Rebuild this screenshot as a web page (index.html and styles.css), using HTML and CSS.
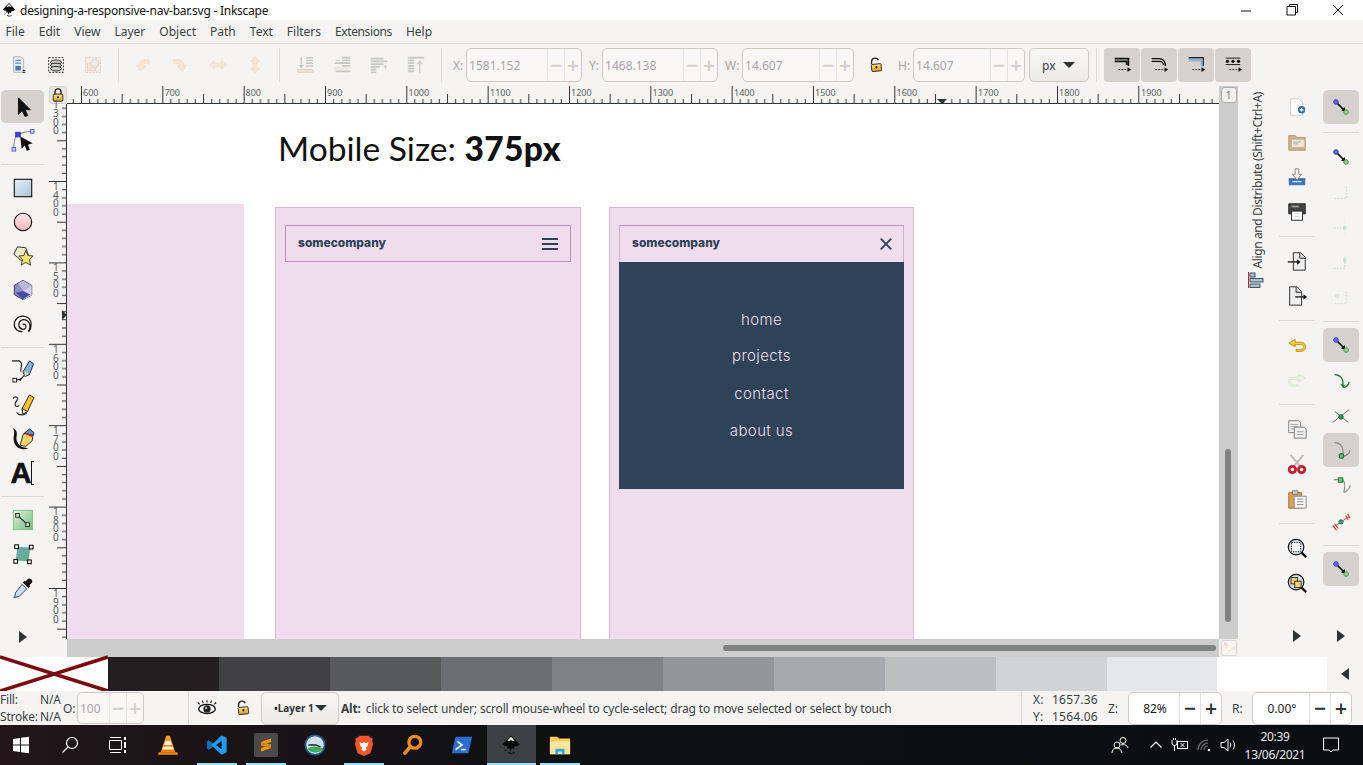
FILE: index.html
```html
<!DOCTYPE html>
<html lang="en">
<head>
<meta charset="utf-8">
<title>designing-a-responsive-nav-bar.svg - Inkscape</title>
<link rel="stylesheet" href="styles.css">
</head>
<body>
<svg class="defs" aria-hidden="true">
  <defs>
    <linearGradient id="gBlue" x1="0" y1="0" x2="1" y2="1"><stop offset="0" stop-color="#e8f0f6"/><stop offset="1" stop-color="#a9c3dc"/></linearGradient>
    <linearGradient id="gPink" x1="0" y1="0" x2="0" y2="1"><stop offset="0" stop-color="#ffe9ec"/><stop offset="1" stop-color="#fbb4bf"/></linearGradient>
    <linearGradient id="gGreen" x1="0" y1="0" x2="1" y2="1"><stop offset="0" stop-color="#e2f2e2"/><stop offset="1" stop-color="#6fbe7a"/></linearGradient>
    <linearGradient id="gTeal" x1="0" y1="0" x2="1" y2="1"><stop offset="0" stop-color="#6fa8b8"/><stop offset="1" stop-color="#62b083"/></linearGradient>
    <linearGradient id="gGold" x1="0" y1="0" x2="0" y2="1"><stop offset="0" stop-color="#fbe27a"/><stop offset="1" stop-color="#e2a11e"/></linearGradient>
    <linearGradient id="gCone" x1="0" y1="0" x2="0" y2="1"><stop offset="0" stop-color="#ffa428"/><stop offset="1" stop-color="#f07d00"/></linearGradient>
    <linearGradient id="gSwatch" x1="0" y1="0" x2="1" y2="1"><stop offset="0" stop-color="#f3b8d4"/><stop offset=".5" stop-color="#fdfbe8"/><stop offset="1" stop-color="#9be4b4"/></linearGradient>
    <symbol id="snap" viewBox="0 0 24 24"><path d="M7.500 7.500l7.500 7.500" stroke="#111" stroke-width="1.800"/><path d="M12 16l5 1-1-5z" fill="#111"/><circle cx="6.500" cy="6.500" r="2.500" fill="#6a6af0" stroke="#2d2dcf"/><circle cx="17.500" cy="17.500" r="2.500" fill="#9bd29b" stroke="#2f8f43"/></symbol>
    <symbol id="faint" viewBox="0 0 24 24"><path d="M5 19h13V6" fill="none" stroke="#d3dfd3" stroke-width="1.600" stroke-dasharray="2 1.400"/></symbol>
    <symbol id="tri-r" viewBox="0 0 12 14"><path d="M2 1l8 6-8 6z" fill="#2e3436"/></symbol>
    <symbol id="lockopen" viewBox="0 0 16 18"><path d="M3 8V5a4 4 0 0 1 7.600-1.500" fill="none" stroke="#222" stroke-width="1.500"/><rect x="3" y="8" width="11" height="8" rx="1" fill="url(#gGold)" stroke="#222" transform="rotate(-6 8 12)"/><circle cx="8.500" cy="11.500" r="1.300" fill="#222"/></symbol>
    <symbol id="ink" viewBox="0 0 24 24"><path d="M12 1.500l9.500 10-3.500 2.500-2-.8-1 3.500-2.200-1.500-1.300 4-1.500-4-2.200.8.300-3.300-2.600.3L2.500 11.500z" fill="#0a0a0a"/><path d="M12 3l4 4.300-2 .2-2-1-2 1-2-.2z" fill="#eee"/><path d="M9 20c2 1.500 5 1.500 7 0M7 17.500l-2 1" stroke="#111" stroke-width="1.300" fill="none"/></symbol>
  </defs>
</svg>

<div class="app">
  <header class="titlebar">
    <svg class="ic16 logo"><use href="#ink"/></svg>
    <span class="title">designing-a-responsive-nav-bar.svg - Inkscape</span>
    <div class="winctl">
      <span class="winbtn"><svg viewBox="0 0 12 12" class="ic12"><path d="M1 7h10" stroke="#111"/></svg></span>
      <span class="winbtn"><svg viewBox="0 0 12 12" class="ic12"><path d="M3.500 2.500V.5h8v8h-2M1 2.500h8.500V11H1z" fill="none" stroke="#111"/></svg></span>
      <span class="winbtn"><svg viewBox="0 0 12 12" class="ic12"><path d="M1 1l10 10M11 1L1 11" stroke="#111"/></svg></span>
    </div>
  </header>

  <nav class="menubar">
    <span>File</span><span>Edit</span><span>View</span><span>Layer</span><span>Object</span><span>Path</span><span>Text</span><span>Filters</span><span class="m-ext">Extensions</span><span>Help</span>
  </nav>

  <div class="toolbar">
    <span class="tslot"><svg class="ic24" viewBox="0 0 24 24"><path d="M6 3h8l3 3v14H6z" fill="#e6ebf1" stroke="#a7b4c2"/><path d="M8 7h6M8 10h6" stroke="#5f8fc0" stroke-width="1.500"/><rect x="8" y="13" width="6" height="5" fill="#4c7aa8"/><path d="M16 18h3M16 20h3" stroke="#111"/></svg></span>
    <span class="tslot"><svg class="ic24" viewBox="0 0 24 24"><rect x="4" y="4" width="16" height="16" fill="none" stroke="#111" stroke-dasharray="2 1.500"/><ellipse cx="12" cy="9" rx="6" ry="2.500" fill="#ccc" stroke="#222"/><ellipse cx="12" cy="12.500" rx="6" ry="2.500" fill="#ccc" stroke="#222"/><ellipse cx="12" cy="16" rx="6" ry="2.500" fill="#ccc" stroke="#222"/></svg></span>
    <span class="tslot"><svg class="ic24" viewBox="0 0 24 24"><rect x="4" y="4" width="16" height="16" fill="#f7eeea" stroke="#f0b9b9" stroke-dasharray="2 1.500"/><rect x="6" y="10" width="9" height="8" fill="#f0e4d6" stroke="#e4d3c0"/><circle cx="14" cy="10" r="4.500" fill="#ece9e4" stroke="#d6d0ca"/></svg></span>
    <span class="tsep"></span>
    <span class="tslot"><svg class="ic24" viewBox="0 0 24 24"><path d="M18 6c-7-1-10 2-10 7H5l5 6 5-6h-3c0-3 2-4 6-3z" transform="rotate(8 12 12)" fill="#f7e7d5" stroke="#efdcc7"/></svg></span>
    <span class="tslot"><svg class="ic24" viewBox="0 0 24 24"><path d="M6 6c7-1 10 2 10 7h3l-5 6-5-6h3c0-3-2-4-6-3z" transform="rotate(-8 12 12)" fill="#f7e7d5" stroke="#efdcc7"/></svg></span>
    <span class="tslot"><svg class="ic24" viewBox="0 0 24 24"><path d="M3 12l5-4.500V10h8V7.500l5 4.500-5 4.500V14H8v2.500z" fill="#f7e7d5" stroke="#efdcc7"/></svg></span>
    <span class="tslot"><svg class="ic24" viewBox="0 0 24 24"><path d="M12 3l4.500 5H14v8h2.500L12 21l-4.500-5H10V8H7.500z" fill="#f7e7d5" stroke="#efdcc7"/></svg></span>
    <span class="tsep"></span>
    <span class="tslot"><svg class="ic24" viewBox="0 0 24 24"><path d="M13 4h8M13 7h8M13 10h8M13 13h8" stroke="#c6c6c4" stroke-width="1.600"/><path d="M8 3v11" stroke="#c6c6c4" stroke-width="1.500"/><path d="M5 12l3 4 3-4z" fill="#c6c6c4"/><path d="M4 17h17v3H4z" fill="#f1e4d2" stroke="#ddd2c2"/></svg></span>
    <span class="tslot"><svg class="ic24" viewBox="0 0 24 24"><path d="M12 4h9M12 7h9M4 10h17M12 13h9M5 19h16" stroke="#c6c6c4" stroke-width="1.800"/><path d="M3 14h18v3H3z" fill="#eee5d8" opacity=".7"/><path d="M5 7h5" stroke="#c6c6c4"/></svg></span>
    <span class="tslot"><svg class="ic24" viewBox="0 0 24 24"><path d="M3 5h14M3 8h18M3 11h14M3 14h10M3 17h6M3 20h6" stroke="#c6c6c4" stroke-width="1.800"/><path d="M17 14h4M19 12v4" stroke="#c6c6c4"/></svg></span>
    <span class="tslot"><svg class="ic24" viewBox="0 0 24 24"><path d="M3 4h18M3 7h7M3 10h7M3 13h7M3 16h7M3 19h7" stroke="#c6c6c4" stroke-width="1.800"/><path d="M16 21V9M13.500 11l2.500-3 2.500 3" stroke="#c6c6c4" fill="none" stroke-width="1.300"/></svg></span>
    <span class="tsep"></span>
    <label class="lab lab-x">X:</label>
    <div class="spin spin-l"><span class="val">1581.152</span><span class="pm">−</span><span class="pm">+</span></div>
    <label class="lab lab-y">Y:</label>
    <div class="spin spin-l"><span class="val">1468.138</span><span class="pm">−</span><span class="pm">+</span></div>
    <label class="lab lab-w">W:</label>
    <div class="spin spin-m"><span class="val">14.607</span><span class="pm">−</span><span class="pm">+</span></div>
    <span class="lockslot"><svg class="ic16"><use href="#lockopen"/></svg></span>
    <label class="lab lab-h">H:</label>
    <div class="spin spin-m"><span class="val">14.607</span><span class="pm">−</span><span class="pm">+</span></div>
    <div class="unit"><span>px</span><i class="caret"></i></div>
    <span class="tsep tsep-u"></span>
    <span class="tbtn"><svg class="ic24" viewBox="0 0 24 24"><path d="M4 5h15v8M4 8h13v4" fill="none" stroke="#111" stroke-width="1.800"/><path d="M8 17h10" stroke="#111" stroke-dasharray="2 1.300"/><path d="M18 14.500l4 2.500-4 2.500z" fill="#111"/></svg></span>
    <span class="tbtn"><svg class="ic24" viewBox="0 0 24 24"><path d="M4 5h8c4 0 7 3 7 8M4 8h8c3 0 5 2 5 4" fill="none" stroke="#111" stroke-width="1.400"/><path d="M8 17h10" stroke="#111" stroke-dasharray="2 1.300"/><path d="M18 14.500l4 2.500-4 2.500z" fill="#111"/></svg></span>
    <span class="tbtn"><svg class="ic24" viewBox="0 0 24 24"><path d="M4 4h16v9h-3V8H4z" fill="#8fb0cf"/><path d="M4 4h16v9" fill="none" stroke="#222" stroke-width="1.200"/><path d="M8 17h10" stroke="#111" stroke-dasharray="2 1.300"/><path d="M18 14.500l4 2.500-4 2.500z" fill="#111"/></svg></span>
    <span class="tbtn"><svg class="ic24" viewBox="0 0 24 24"><path d="M4 4.500h16" stroke="#111"/><circle cx="6" cy="8" r="1.800" fill="#111"/><circle cx="12" cy="8" r="1.800" fill="#111"/><circle cx="18" cy="8" r="1.800" fill="#111"/><path d="M4 11.500h16" stroke="#111"/><path d="M8 17h10" stroke="#111" stroke-dasharray="2 1.300"/><path d="M18 14.500l4 2.500-4 2.500z" fill="#111"/></svg></span>
  </div>

  <main class="workspace">
    <aside class="col tools">
      <span class="slot on"><svg class="ic24" viewBox="0 0 24 24"><path d="M7 2v18l4.200-4 3 6.500 3-1.300-3-6.200H20z" fill="#111" stroke="#111" stroke-linejoin="round"/></svg></span>
      <span class="slot"><svg class="ic24" viewBox="0 0 24 24"><path d="M2 20C2 11 4 6 7 5c5-3 10-3.500 14-3.500" fill="none" stroke="#777"/><rect x="4" y="2.500" width="5" height="5" fill="#3c3cf0" stroke="#3030c0"/><rect x="20" y="-.5" width="4" height="4" fill="#ccf" stroke="#5555e0"/><rect x="0" y="19" width="4" height="4" fill="#ccf" stroke="#5555e0"/><path d="M9 7l13.500 7.500-5 1.500 2 5.500-3.500 1-2-5.500-3.500 3.500z" fill="#111"/></svg></span>
      <span class="sep"></span>
      <span class="slot"><svg class="ic24" viewBox="0 0 24 24"><rect x="2.500" y="2.500" width="19" height="19" fill="url(#gBlue)" stroke="#111" stroke-width="1.200"/></svg></span>
      <span class="slot"><svg class="ic24" viewBox="0 0 24 24"><circle cx="12" cy="12" r="9.500" fill="url(#gPink)" stroke="#111" stroke-width="1.200"/></svg></span>
      <span class="slot"><svg class="ic24" viewBox="0 0 24 24"><path d="M6 2l9 1 3 8-8 6-8-7z" fill="#efe9cc" stroke="#222"/><path d="M15 6l2.500 5.500 5.500.5-4 4 1.500 6-5.500-3-5 3 1.500-6-4-4 5.500-.5z" fill="#f6e46a" stroke="#333"/></svg></span>
      <span class="slot"><svg class="ic24" viewBox="0 0 24 24"><path d="M12 1.500l9.500 5.500v10.500L12 22.500 2.500 17V7z" fill="#8f8fc8" stroke="#333"/><path d="M12 1.500l9.500 5.500L12 13 6.500 5z" fill="#b7b7dd"/><path d="M12 13l9.500-6v10.500L12 22.500z" fill="#d0d0ee"/><path d="M4 15l8-2 8 4-8 5z" fill="#4a4aa8"/></svg></span>
      <span class="slot"><svg class="ic24" viewBox="0 0 24 24"><path d="M12 13c1-2 4 0 3 3-1.500 3-7 2-7.500-2.500C7 8 12 6 16 8c4 2.500 5 8 2 12M18 21C22 16 22 8 17 5 11 1 3 5 2.500 12c-.3 6 5 9 9 8" fill="none" stroke="#111" stroke-width="1.300"/></svg></span>
      <span class="sep"></span>
      <span class="slot"><svg class="ic24" viewBox="0 0 24 24"><path d="M0 1h8l2 2c2 3-2 7 0 10" fill="none" stroke="#222" stroke-width="1.200"/><path d="M12 13l7-12 4.500 3-4.500 12-5 2z" fill="#7fb2dc" stroke="#224"/><path d="M14 12l4 3-4 3z" fill="#f0d480"/><path d="M13 17c-2 4-5 5-9 5" fill="none" stroke="#222" stroke-width="1.200"/><rect x="1" y="20" width="4" height="4" fill="#fff" stroke="#111"/><rect x="8" y="20.500" width="2" height="2" fill="#111"/></svg></span>
      <span class="slot"><svg class="ic24" viewBox="0 0 24 24"><path d="M1 5c2-3 6-2 5 1-1 2-4 4-2 7 2 2 3-1 4 0" fill="none" stroke="#222" stroke-width="1.200"/><path d="M11 16l8-15 5 3-7 15-5 3z" fill="#f9c02e" stroke="#222"/><path d="M11 16l6 3-5 3z" fill="#fff" stroke="#222"/><path d="M5 20c3 4 8 3 11 1" fill="none" stroke="#222" stroke-width="1.200"/></svg></span>
      <span class="slot"><svg class="ic24" viewBox="0 0 24 24"><path d="M1 0c4 2 5 5 4 9-1 5 2 10 7 12l6 1c-7 3-15 0-16-8C1 9 4 5 1 0z" fill="#111"/><path d="M9 19l3-12 6-3 5 3-1 7-7 6z" fill="#f9d26a" stroke="#222"/><path d="M13 6l6-5 5 4-1 3z" fill="#5a92c8" stroke="#222"/><path d="M16 6l6 3" stroke="#d11" stroke-width="2"/></svg></span>
      <span class="slot"><span class="texticon">A</span><i class="ibeam"></i></span>
      <span class="sep"></span>
      <span class="slot"><svg class="ic24" viewBox="0 0 24 24"><rect x="1.500" y="1.500" width="21" height="21" fill="url(#gGreen)" stroke="#7bc089"/><path d="M5.500 6.500l12 11" stroke="#333" stroke-width="1.300"/><rect x="4" y="5" width="4" height="4" fill="#ddd" stroke="#222"/><rect x="15" y="15" width="4" height="4" fill="#ddd" stroke="#222"/></svg></span>
      <span class="slot"><svg class="ic24" viewBox="0 0 24 24"><path d="M6 4l14 1-2 15-14-1z" fill="url(#gTeal)"/><g fill="#fff" stroke="#111" stroke-width="1.200"><rect x="3" y="2" width="4" height="4"/><rect x="19" y="2.500" width="4" height="4"/><rect x="2" y="18" width="4" height="4"/><rect x="17" y="18.500" width="4" height="4"/></g></svg></span>
      <span class="slot"><svg class="ic24" viewBox="0 0 24 24"><path d="M21 2.500c2 2 1 3.500 0 4.500l-2 2 .8 1-2 2-6-6 2-2 1 .8 2-2c1-1 2.500-2 4.200-.3z" fill="#111"/><path d="M11 8l5 5-8 8-4 1-1-1 1-4z" fill="#cfe0ee" stroke="#334"/><circle cx="3" cy="22" r="1.300" fill="#4a7fb0"/></svg></span>
      <span class="slot tri"><svg class="ic14" viewBox="0 0 12 14"><use href="#tri-r"/></svg></span>
    </aside>

    <section class="center">
      <span class="lockbtn"><svg class="ic14" viewBox="0 0 14 16"><rect x="1.500" y="7" width="11" height="8" rx="1" fill="url(#gGold)" stroke="#222"/><path d="M3.500 7V4.500a3.500 3.500 0 0 1 7 0V7" fill="none" stroke="#222" stroke-width="1.500"/><circle cx="7" cy="10.500" r="1.200" fill="#222"/></svg></span>
      <svg class="hruler" width="1152" height="18">
        <defs>
          <pattern id="ph" patternUnits="userSpaceOnUse" x="14" y="0" width="81.330" height="18">
            <path d="M.5 0v17M8.600 13v4M16.800 13v4M24.900 13v4M33 13v4M41.200 8v9M49.300 13v4M57.400 13v4M65.600 13v4M73.700 13v4" stroke="#2e3436" fill="none"/>
          </pattern>
        </defs>
        <rect width="1152" height="17" fill="url(#ph)"/>
        <path d="M0 17.500h1152" stroke="#2e3436"/>
        <path d="M870 13h10l-5 5z" fill="#2e3436"/>
        <g class="rtext">
          <text x="16" y="10">600</text><text x="97.500" y="10">700</text><text x="178.500" y="10">800</text><text x="260" y="10">900</text><text x="341.500" y="10">1000</text><text x="423" y="10">1100</text><text x="504" y="10">1200</text><text x="585.500" y="10">1300</text><text x="667" y="10">1400</text><text x="748" y="10">1500</text><text x="829.500" y="10">1600</text><text x="911" y="10">1700</text><text x="992" y="10">1800</text><text x="1074" y="10">1900</text>
        </g>
      </svg>
      <span class="badgecell"><span class="badge">1</span></span>

      <svg class="vruler" width="18" height="535">
        <defs>
          <pattern id="pv" patternUnits="userSpaceOnUse" x="0" y="-4.400" width="18" height="81.400">
            <path d="M0 .5h17M13 8.600h4M13 16.800h4M13 24.900h4M13 33h4M8 41.200h9M13 49.300h4M13 57.400h4M13 65.600h4M13 73.700h4" stroke="#2e3436" fill="none"/>
          </pattern>
        </defs>
        <rect width="17" height="535" fill="url(#pv)"/>
        <path d="M17.500 0v535" stroke="#2e3436"/>
        <path d="M13 206l5 5-5 5z" fill="#2e3436"/>
        <g class="rtext vt">
          <text x="4 4 4 4" y="4 13 21.500 30">1300</text>
          <text x="4 4 4 4" y="86 94.500 103 111.500">1400</text>
          <text x="4 4 4 4" y="167 175.500 184 192.500">1500</text>
          <text x="4 4 4 4" y="249 257.500 266 274.500">1600</text>
          <text x="4 4 4 4" y="330 338.500 347 355.500">1700</text>
          <text x="4 4 4 4" y="411 419.500 428 436.500">1800</text>
          <text x="4 4 4 4" y="493 501.500 510 518.500">1900</text>
        </g>
      </svg>

      <div class="canvas">
        <h1 class="mobile">Mobile Size: <b>375px</b></h1>
        <div class="offpage"></div>
        <div class="board board-a">
          <div class="nav">
            <span class="brand">somecompany</span>
            <svg class="burger" viewBox="0 0 16 12"><path d="M0 1h16M0 6h16M0 11h16" stroke="#2e4358" stroke-width="1.900"/></svg>
          </div>
        </div>
        <div class="board board-b">
          <div class="nav nav-open">
            <span class="brand">somecompany</span>
            <svg class="closex" viewBox="0 0 12 12"><path d="M.7.7l10.600 10.600M11.300.7L.7 11.300" stroke="#2e4358" stroke-width="1.800"/></svg>
          </div>
          <ul class="drop">
            <li>home</li><li>projects</li><li>contact</li><li>about us</li>
          </ul>
        </div>
      </div>

      <div class="vscroll"><i class="vthumb"></i></div>
      <span class="blank"></span>
      <div class="hscroll"><i class="hthumb"></i></div>
      <span class="wheel"><svg class="ic16" viewBox="0 0 16 16"><rect x=".5" y=".5" width="15" height="15" rx="2" fill="#f7f6f4" stroke="#d8d4d0"/><path d="M3 2l11 6-9 6z" fill="url(#gSwatch)"/></svg></span>
    </section>

    <aside class="docktab">
      <span class="docklabel">Align and Distribute (Shift+Ctrl+A)</span>
      <svg class="alignic" viewBox="0 0 16 18"><path d="M.5 1v16" stroke="#c22"/><rect x="2" y="2" width="5" height="4" fill="#a8c0d8" stroke="#456"/><rect x="2" y="7.500" width="13" height="3.500" fill="#a8c0d8" stroke="#456"/><rect x="2" y="13" width="10" height="3.500" fill="#a8c0d8" stroke="#456"/></svg>
    </aside>

    <aside class="col commands">
      <span class="slot"><svg class="ic24" viewBox="0 0 24 24"><path d="M5 3h9l4 4v14H5z" fill="#fff" stroke="#ccc"/><circle cx="17" cy="15" r="4" fill="#2f6fb5"/><path d="M15 15h4M17 13v4" stroke="#fff" stroke-width="1.400"/></svg></span>
      <span class="slot"><svg class="ic24" viewBox="0 0 24 24"><path d="M3 5h7l2 2h9v14H3z" fill="#c9ae8a" stroke="#b39b78"/><path d="M6 9h14v9H6z" fill="#efe6d6" stroke="#c9b69a"/><path d="M8 12h8M8 14h5" stroke="#aaa"/></svg></span>
      <span class="slot"><svg class="ic24" viewBox="0 0 24 24"><path d="M3 14h18v7H3z" fill="#3c78bb"/><path d="M3 14h18" stroke="#204e85"/><path d="M10 3h4v6h3l-5 6-5-6h3z" fill="#eee" stroke="#888"/><path d="M7 17h10" stroke="#cde" stroke-width="1.500"/></svg></span>
      <span class="slot"><svg class="ic24" viewBox="0 0 24 24"><path d="M3 3h18v11H3z" fill="#444" stroke="#222"/><path d="M6 5h8v2H6z" fill="#999"/><path d="M6 11h12v10H6z" fill="#fff" stroke="#222"/><path d="M9 14h6M9 17h6" stroke="#bcd"/></svg></span>
      <span class="sep"></span>
      <span class="slot"><svg class="ic24" viewBox="0 0 24 24"><path d="M8 3h8l5 5v14H8z" fill="#eee" stroke="#222"/><path d="M15 3v6h6" fill="#ddd" stroke="#222"/><path d="M2 13h11" stroke="#111" stroke-width="1.400"/><path d="M12 10l4 3-4 3z" fill="#111"/></svg></span>
      <span class="slot"><svg class="ic24" viewBox="0 0 24 24"><path d="M4 2h8l5 5v15H4z" fill="#eee" stroke="#222"/><path d="M11 2v6h6" fill="#ddd" stroke="#222"/><path d="M10 13h11" stroke="#111" stroke-width="1.400"/><path d="M19 10l4 3-4 3z" fill="#111"/></svg></span>
      <span class="sep"></span>
      <span class="slot"><svg class="ic24" viewBox="0 0 24 24"><path d="M10 6L3 10l7 4v-2.500h6c3 0 4 1.500 3 3.500-1 2-3 2-8 2v2c6 0 9 0 10-3 1-4-1-7-5-7h-6z" fill="#f2cf3b" stroke="#b79412"/></svg></span>
      <span class="slot"><svg class="ic24" viewBox="0 0 24 24"><path d="M14 6l7 4-7 4v-2.500H8c-3 0-4 1.500-3 3.500 1 2 3 2 8 2v2c-6 0-9 0-10-3-1-4 1-7 5-7h6z" fill="#eaf3e6" stroke="#d4e6cd"/></svg></span>
      <span class="sep"></span>
      <span class="slot"><svg class="ic24" viewBox="0 0 24 24"><path d="M3 3h11l2 2v11H3z" fill="#f5f5f5" stroke="#777"/><path d="M5 7h8M5 9.500h8M5 12h6" stroke="#999"/><path d="M9 10h11l2 2v10H9z" fill="#eee" stroke="#777"/><path d="M12 15h7M12 18h7" stroke="#999"/></svg></span>
      <span class="slot"><svg class="ic24" viewBox="0 0 24 24"><path d="M5 2l10 12M19 2L9 14" stroke="#bbb" stroke-width="2"/><circle cx="7" cy="18" r="3.500" fill="#fff" stroke="#c71d2d" stroke-width="3"/><circle cx="17" cy="18" r="3.500" fill="#fff" stroke="#c71d2d" stroke-width="3"/></svg></span>
      <span class="slot"><svg class="ic24" viewBox="0 0 24 24"><path d="M3 5h14v17H3z" fill="#d7a258" stroke="#9c6d2e"/><path d="M7 3h6v4H7z" fill="#ccc" stroke="#777"/><path d="M9 9h13v13H9z" fill="#f7f7f7" stroke="#888"/><path d="M12 12h7M12 15h7M12 18h7" stroke="#888"/></svg></span>
      <span class="sep"></span>
      <span class="slot"><svg class="ic24" viewBox="0 0 24 24"><circle cx="11" cy="11" r="8.500" fill="#d5e2ee" stroke="#111" stroke-width="1.300"/><rect x="6" y="6" width="10" height="10" fill="#fff" stroke="#111" stroke-dasharray="1.500 1.200"/><path d="M17 17l5 5" stroke="#111" stroke-width="2.500"/></svg></span>
      <span class="slot"><svg class="ic24" viewBox="0 0 24 24"><circle cx="11" cy="11" r="8.500" fill="#d5e2ee" stroke="#111" stroke-width="1.300"/><rect x="5.500" y="6" width="7" height="7" fill="#f5d36b" stroke="#222"/><rect x="9.500" y="10" width="7" height="7" fill="#f5d36b" stroke="#222"/><path d="M17 17l5 5" stroke="#111" stroke-width="2.500"/></svg></span>
      <span class="slot tri"><svg class="ic14" viewBox="0 0 12 14"><use href="#tri-r"/></svg></span>
    </aside>

    <aside class="col snapbar">
      <span class="slot on"><svg class="ic24"><use href="#snap"/></svg></span>
      <span class="sep"></span>
      <span class="slot"><svg class="ic24"><use href="#snap"/></svg></span>
      <span class="slot"><svg class="ic24"><use href="#faint"/></svg></span>
      <span class="slot"><svg class="ic24" viewBox="0 0 24 24"><path d="M4 13h12" fill="none" stroke="#d3dfd3" stroke-width="1.600" stroke-dasharray="2 1.400"/><path d="M16 3v20" stroke="#e4ece4" stroke-dasharray="2 1.400"/><circle cx="16" cy="13" r="2.300" fill="#cfe0cf"/></svg></span>
      <span class="slot"><svg class="ic24" viewBox="0 0 24 24"><path d="M4 19h12V6" fill="none" stroke="#d3dfd3" stroke-width="1.600" stroke-dasharray="2 1.400"/><ellipse cx="16" cy="10" rx="1.800" ry="2.800" fill="#cfe0cf"/></svg></span>
      <span class="slot"><svg class="ic24" viewBox="0 0 24 24"><path d="M5 19h13V5" fill="none" stroke="#d9e4d9" stroke-width="1.600" stroke-dasharray="2 1.400"/><circle cx="8" cy="11" r="2" fill="#e2ede2" stroke="#cfe0cf"/></svg></span>
      <span class="sep"></span>
      <span class="slot on"><svg class="ic24"><use href="#snap"/></svg></span>
      <span class="slot"><svg class="ic24" viewBox="0 0 24 24"><path d="M5 5c6 0 10 4 9 13" fill="none" stroke="#1d7a34" stroke-width="1.500"/><path d="M21 13c-1 4-4 6-7 6" fill="none" stroke="#1d7a34" stroke-width="1.500"/><path d="M11 15l3 4 3-2z" fill="#1d7a34"/></svg></span>
      <span class="slot"><svg class="ic24" viewBox="0 0 24 24"><path d="M3 19L21 5M5 7l15 12" stroke="#666"/><circle cx="12" cy="13" r="2.500" fill="#2f9a4a" stroke="#165"/></svg></span>
      <span class="slot on"><svg class="ic24" viewBox="0 0 24 24"><path d="M5 4c6 0 10 4 9 14M22 12c-1 4-3 6-8 7" fill="none" stroke="#888" stroke-width="1.200"/><circle cx="12.500" cy="18.500" r="2.500" fill="#6cc17d" stroke="#1d7a34" stroke-width="1.200"/></svg></span>
      <span class="slot"><svg class="ic24" viewBox="0 0 24 24"><path d="M4 5h10c3 3 2 10 1 14M22 11c-1 4-3 7-7 8" fill="none" stroke="#888" stroke-width="1.200"/><rect x="9" y="3" width="5" height="5" fill="#6cc17d" stroke="#1d7a34"/></svg></span>
      <span class="slot"><svg class="ic24" viewBox="0 0 24 24"><path d="M3 19L21 7" stroke="#666"/><path d="M3 17l4 5M5 15l4 5M17 6l3 5M19 4l3 5" stroke="#d32" stroke-width="1.200"/><circle cx="12" cy="13" r="2.300" fill="#4aa860" stroke="#165"/></svg></span>
      <span class="sep"></span>
      <span class="slot on"><svg class="ic24"><use href="#snap"/></svg></span>
      <span class="slot tri"><svg class="ic14" viewBox="0 0 12 14"><use href="#tri-r"/></svg></span>
    </aside>
  </main>

  <div class="palette">
    <svg class="noswatch" viewBox="0 0 108 34" preserveAspectRatio="none"><path d="M0 0l108 34M108 0L0 34" stroke="#7a0c10" stroke-width="3.500"/></svg>
    <i class="sw s1"></i><i class="sw s2"></i><i class="sw s3"></i><i class="sw s4"></i><i class="sw s5"></i><i class="sw s6"></i><i class="sw s7"></i><i class="sw s8"></i><i class="sw s9"></i><i class="sw s10"></i><i class="sw s11"></i>
    <span class="palarrow"><svg class="ic14 flip" viewBox="0 0 12 14"><use href="#tri-r"/></svg></span>
  </div>

  <footer class="status">
    <div class="fillstroke">
      <span>Fill:</span><span>N/A</span>
      <span>Stroke:</span><span>N/A</span>
    </div>
    <label class="lab lab-o">O:</label>
    <div class="spin spin-o"><span class="val">100</span><span class="pm">−</span><span class="pm">+</span></div>
    <span class="vsep vsep-a"></span>
    <span class="eye"><svg class="ic24" viewBox="0 0 24 24"><ellipse cx="12" cy="13" rx="9" ry="5" fill="#fff" stroke="#111" stroke-width="1.500"/><circle cx="12" cy="13" r="4" fill="#222"/><circle cx="11" cy="12" r="1.200" fill="#ddd"/><path d="M4 8L2 6M8 6.500L7 4M12 6V3.500M16 6.500L17 4M20 8l2-2" stroke="#111" stroke-width="1.200"/></svg></span>
    <span class="slock"><svg class="ic16"><use href="#lockopen"/></svg></span>
    <div class="layer"><span>•Layer 1</span><i class="caret"></i></div>
    <p class="msg"><b>Alt:</b> click to select under; scroll mouse-wheel to cycle-select; drag to move selected or select by touch</p>
    <div class="readout">
      <div class="coords"><span>X:</span><span>1657.36</span><span>Y:</span><span>1564.06</span></div>
      <label class="lab lab-z">Z:</label>
      <div class="spin spin-z"><span class="val">82%</span><span class="pm">−</span><span class="pm">+</span></div>
      <label class="lab lab-r">R:</label>
      <div class="spin spin-r"><span class="val">0.00°</span><span class="pm">−</span><span class="pm">+</span></div>
    </div>
  </footer>

  <div class="taskbar">
    <span class="tk tk-win"><svg class="ic18" viewBox="0 0 18 18"><path d="M1 3l7-1v6.500H1zM9 1.800L17 .8v7.700H9zM1 9.500h7V16l-7-1zM9 9.500h8v7.700l-8-1z" fill="#fff"/></svg></span>
    <span class="tk"><svg class="ic18" viewBox="0 0 18 18"><circle cx="11" cy="7" r="5.500" fill="none" stroke="#fff" stroke-width="1.200"/><path d="M7 11l-5.500 5.500" stroke="#fff" stroke-width="1.300"/></svg></span>
    <span class="tk tk-tv"><svg class="ic18" viewBox="0 0 18 18"><path d="M.5 4.500h12v9H.5zM1 1.500h11M1 16.500h11" fill="none" stroke="#fff"/><path d="M15 1h2v3h-2zM15 6h2v6h-2zM15 14h2v3h-2z" fill="#fff"/></svg></span>
    <span class="tk"><svg class="ic24" viewBox="0 0 24 24"><path d="M10 2h4l6 18H4z" fill="url(#gCone)"/><path d="M9 8h6l1.300 4H7.700z" fill="#fff"/><path d="M6.800 14h10.400l1 3H5.800z" fill="#fff" opacity=".9"/><path d="M2 20h20l1 2.500H1z" fill="#f08a00"/></svg></span>
    <span class="tk on"><svg class="ic24" viewBox="0 0 24 24"><path d="M17 1.500l5.500 2.700v15.600L17 22.500 7.500 13.500 3 17l-1.500-.8V7.800L3 7l4.500 3.500zM17 7.500L11 12l6 4.500z" fill="#1f9cf0"/><path d="M3 7L1.500 7.800v8.400L3 17l4.500-3.500L6 12l1.500-1.500z" fill="#0a6fb8"/></svg></span>
    <span class="tk on"><span class="sublime"><svg class="ic16" viewBox="0 0 16 16"><path d="M13 1.500L3 5v3.500l10-3.500zM3 14.500L13 11V7.500L3 11z" fill="#ff9800"/><path d="M3 8.500l10 2.700V7.500L3 5z" fill="#e08400"/></svg></span></span>
    <span class="tk"><svg class="ic24" viewBox="0 0 24 24"><circle cx="12" cy="12" r="10.500" fill="#cfe0ea" stroke="#2b5d8c" stroke-width="2"/><path d="M4 16c4-3 12-3 17 0-3 5-13 6-17 0z" fill="#3fae5c"/><path d="M5 12h8l5 2" stroke="#222" stroke-width="1.400" fill="none"/></svg></span>
    <span class="tk on"><svg class="ic24" viewBox="0 0 24 24"><path d="M7 2h10l2 2 2.500 1-.5 3 1 3-3 10-7 3-7-3-3-10 1-3-.5-3L5 4z" fill="#f1562b"/><path d="M7 9l3 1 2-1 2 1 3-1-1 4-2 2 1 2-3 2-3-2 1-2-2-2z" fill="#fff"/></svg></span>
    <span class="tk"><svg class="ic24" viewBox="0 0 24 24"><circle cx="14" cy="9" r="6.500" fill="none" stroke="#f08a1d" stroke-width="3.600"/><path d="M9 14l-6 7" stroke="#f08a1d" stroke-width="3.800" stroke-linecap="round"/></svg></span>
    <span class="tk"><svg class="ic24" viewBox="0 0 24 24"><path d="M5 3h18l-4 18H1z" fill="#2a6fd0"/><path d="M7 8l5 4-7 5" fill="none" stroke="#fff" stroke-width="1.800"/><path d="M11 17h5" stroke="#fff" stroke-width="1.800"/></svg></span>
    <span class="tk active on"><svg class="ic24"><use href="#ink"/></svg></span>
    <span class="tk on"><svg class="ic24" viewBox="0 0 24 24"><path d="M1 3h8l2 2h12v17H1z" fill="#f6cf5e"/><path d="M1 8h22v14H1z" fill="#fde69a"/><path d="M7 16h10v6h-3v-3h-4v3H7z" fill="#29a8e0"/></svg></span>
    <div class="tray">
      <span class="ty ty-p"><svg class="ic18" viewBox="0 0 18 18"><circle cx="6" cy="9" r="3" fill="none" stroke="#fff"/><circle cx="12" cy="4.500" r="3" fill="none" stroke="#fff"/><path d="M1 17c0-3 2-5 5-5 3 0 4 2 5 5M10 9c3-1 6 0 7 3" fill="none" stroke="#fff"/></svg></span>
      <span class="ty ty-c"><svg class="ic12" viewBox="0 0 12 12"><path d="M.5 8.500L6 3l5.500 5.500" fill="none" stroke="#fff" stroke-width="1.200"/></svg></span>
      <span class="ty ty-b"><svg class="ic18" viewBox="0 0 18 14"><path d="M1 2v3a2.500 2.500 0 0 0 5 0V2M2.500 0v2M4.500 0v2M3.500 7.500V13" fill="none" stroke="#fff"/><rect x="6.500" y="3.500" width="10" height="7" fill="none" stroke="#fff"/><path d="M9.500 5l4 4M13.500 5l-4 4" stroke="#fff"/></svg></span>
      <span class="ty ty-w"><svg class="ic18" viewBox="0 0 18 18"><path d="M2 14a10 10 0 0 1 10-10M5 14a7 7 0 0 1 7-7M8 14a4 4 0 0 1 4-4" fill="none" stroke="#777" stroke-width="1.200"/><circle cx="13" cy="14" r="1.300" fill="#fff"/></svg></span>
      <span class="ty ty-s"><svg class="ic18" viewBox="0 0 18 18"><path d="M1 6.500h3l4-3.500v12l-4-3.500H1z" fill="none" stroke="#fff"/><path d="M10 6.500c1 1.500 1 3.500 0 5M13 4.500c2 3 2 6 0 9" fill="none" stroke="#fff"/></svg></span>
      <div class="clock"><span>20:39</span><span>13/06/2021</span></div>
      <span class="ty ty-n"><svg class="ic18" viewBox="0 0 18 18"><path d="M1.500 2h15v12H11l-2 2-2-2H1.500z" fill="none" stroke="#fff"/></svg></span>
    </div>
  </div>
</div>
</body>
</html>
```

FILE: styles.css
```css
* { box-sizing: border-box; }
html, body { margin: 0; padding: 0; height: 100%; overflow: hidden; background: #f5f4f2; }
body { font-family: "Noto Sans", "Open Sans", sans-serif; font-size: 12px; color: #2e3436; }
i { display: block; font-style: normal; }
svg { display: block; flex: none; overflow: visible; }
.defs { position: absolute; width: 0; height: 0; }
.ic12 { width: 12px; height: 12px; }
.ic14 { width: 14px; height: 14px; }
.ic16 { width: 16px; height: 16px; }
.ic18 { width: 18px; height: 18px; }
.ic24 { width: 22px; height: 22px; }

.app { width: 1363px; height: 765px; display: flex; flex-direction: column; }

/* title bar */
.titlebar { height: 20px; background: #fff; display: flex; align-items: center; padding-left: 1px; color: #111; }
.logo { margin-right: 3px; }
.title { font-size: 12px; letter-spacing: -.24px; }
.winctl { margin-left: auto; display: flex; padding-right: 2px; }
.winbtn { width: 46px; height: 20px; display: flex; align-items: center; justify-content: center; }

/* menu */
.menubar { height: 24px; display: flex; align-items: center; gap: 14px; padding-left: 5.500px; border-bottom: 1px solid #dcdad6; font-size: 12px; color: #3a3f44; background: #f5f4f2; }
.m-ext { letter-spacing: -.4px; }

/* top toolbar */
.toolbar { height: 42px; display: flex; align-items: center; background: #f5f4f2; }
.tslot { width: 37.200px; height: 34px; display: flex; align-items: center; justify-content: center; }
.tsep { width: 1px; height: 34px; margin: 0 6px; background: #dcdad6; flex: none; }
.tsep-u { margin: 0 7px; }
.lab { color: #a9a6a3; font-size: 12px; display: block; }
.lab-x { margin-left: 5px; width: 13px; }
.lab-y { margin-left: 7px; width: 13px; }
.lab-w { margin-left: 7px; width: 17px; }
.lab-h { width: 15px; }
.lockslot { width: 44px; display: flex; justify-content: center; }
.spin { height: 34px; display: flex; align-items: stretch; border: 1px solid #cfc9c3; border-radius: 5px; background: #f9f8f7; flex: none; }
.spin .val { flex: 1; display: flex; align-items: center; padding-left: 2px; color: #a9a3ad; font-size: 12px; }
.spin .pm { width: 17px; display: flex; align-items: center; justify-content: center; border-left: 1px solid #e4e1de; color: #d4d1ce; font-size: 21px; font-weight: 600; line-height: 1; }
.spin-l { width: 116px; }
.spin-m { width: 112px; }
.unit { width: 60px; height: 34px; margin-left: 4px; display: flex; align-items: center; justify-content: space-between; padding: 0 13px 0 12px; border: 1px solid #cfc9c3; border-radius: 5px; background: linear-gradient(#f8f7f6, #ecebe8); color: #3c3a55; flex: none; }
.caret { width: 0; height: 0; border-left: 6px solid transparent; border-right: 6px solid transparent; border-top: 6px solid #2e3436; }
.tbtn { width: 36px; height: 34px; margin-right: 1px; border-radius: 4px; background: #d5d1cc; display: flex; align-items: center; justify-content: center; flex: none; }

/* workspace */
.workspace { height: 571px; display: flex; background: #f5f4f2; }
.col { display: flex; flex-direction: column; padding-top: 4px; flex: none; }
.tools { width: 49px; padding-left: 1px; }
.commands { width: 38px; align-items: center; padding-top: 3px; }
.snapbar { width: 47px; padding-left: 7px; }
.tools .slot { width: 43px; }
.commands .slot { width: 36px; }
.snapbar .slot { width: 36px; }
.slot { height: 34px; flex: none; position: relative; display: flex; align-items: center; justify-content: center; border-radius: 5px; }
.commands .slot, .snapbar .slot { height: 35px; }
.slot.on { background: #d5d1cc; border: 1px solid #f5f4f2; border-width: 0 0 1px; }
.sep { height: 1px; margin: 6px 0; background: #dcdad6; flex: none; width: 100%; }
.commands .sep, .snapbar .sep { width: 36px; margin: 6.500px 0; }
.tools .sep { width: 43px; }
.tools .slot.tri, .commands .slot.tri, .snapbar .slot.tri { margin-top: auto; margin-bottom: 3.500px; }
.texticon { font-family: "Liberation Sans", sans-serif; font-weight: 700; font-size: 29px; line-height: 1; color: #111; margin-right: 3px; -webkit-text-stroke: .6px #111; }
.ibeam { position: absolute; right: 10px; top: 5px; width: 3px; height: 24px; border-left: 1px solid #111; border-top: 1px solid #111; border-bottom: 1px solid #111; }

.center { width: 1189px; flex: none; display: grid; grid-template-columns: 18px 1152px 19px; grid-template-rows: 18px 535px 18px; }
.lockbtn { display: flex; align-items: center; justify-content: center; background: #e9e6e2; border-radius: 3px; border: 1px solid #d5d1cc; }
.rtext text { font-family: "Noto Sans", sans-serif; font-size: 9px; fill: #5a5f63; }
.rtext.vt text { font-size: 10px; fill: #555a60; }
.badgecell { background: #cdcdcd; display: flex; align-items: center; justify-content: center; }
.badge { width: 16px; height: 16px; display: flex; align-items: center; justify-content: center; border: 1px solid #aaa; border-radius: 3px; background: #f2f1ef; font-size: 10px; color: #777; }

.canvas { position: relative; overflow: hidden; background: #fff; }
.mobile { position: absolute; left: 211px; top: 21px; margin: 0; font-family: Lato, sans-serif; font-size: 33.600px; font-weight: 400; line-height: 46px; color: #111; white-space: nowrap; }
.mobile b { font-weight: 900; letter-spacing: .3px; }
.offpage { position: absolute; left: 0; top: 100px; width: 177px; height: 440px; background: #efdcec; }
.board { position: absolute; top: 103px; width: 306px; height: 440px; background: #efdcec; border: 1px solid #d9b9d8; padding: 17px 9px 0; }
.board-a { left: 208px; }
.board-b { left: 542px; width: 305px; }
.nav { height: 37px; display: flex; align-items: center; justify-content: space-between; padding: 0 12px 2px; border: 1px solid #bd92c0; }
.nav-open { border-color: #d3aed4; border-bottom: 0; border-top-color: #bd92c0; padding: 0 11px 3px 12px; }
.brand { font-family: Inter, sans-serif; font-weight: 800; font-size: 12px; color: #2e4358; }
.burger { width: 16px; height: 12px; margin-top: 2px; }
.closex { width: 12px; height: 12px; margin-top: 2px; }
.drop { list-style: none; margin: 0; padding: 39px 0 0; height: 227px; background: #2e4358; text-align: center; font-family: Inter, sans-serif; font-weight: 300; font-size: 15px; line-height: 37px; color: #efdcec; letter-spacing: .4px; }
.drop li:nth-child(2) { margin: -1px 0 1px; }

.vscroll { background: #cdcdcd; padding: 345px 0 0 6px; }
.vthumb { width: 6px; height: 173px; border-radius: 3px; background: #808383; }
.blank { background: #f5f4f2; }
.hscroll { background: #cdcdcd; padding: 6px 0 0 656px; }
.hthumb { width: 493px; height: 6px; border-radius: 3px; background: #808383; }
.wheel { background: #f1efec; display: flex; align-items: center; justify-content: center; }

.docktab { width: 40px; flex: none; display: flex; flex-direction: column; align-items: center; padding: 6px 0 0 0; }
.docklabel { writing-mode: vertical-rl; transform: rotate(180deg); font-size: 12px; letter-spacing: -.37px; color: #3a3f44; white-space: nowrap; margin-left: -2px; }
.alignic { width: 16px; height: 18px; margin-left: -4px; margin-top: 2px; }

/* palette */
.palette { height: 34px; display: flex; }
.noswatch { width: 108px; height: 34px; background: #fff; }
.sw { width: 111px; height: 34px; flex: none; }
.s1 { background: #231f20; } .s2 { background: #414042; } .s3 { background: #58595b; }
.s4 { background: #6d6e71; } .s5 { background: #808285; } .s6 { background: #939598; }
.s7 { background: #a7a9ac; } .s8 { background: #bcbec0; } .s9 { background: #d1d3d4; }
.s10 { background: #e6e7e8; width: 110px; } .s11 { background: #fff; width: 110px; }
.palarrow { flex: 1; display: flex; align-items: center; justify-content: center; }
.flip { transform: scaleX(-1); }

/* status bar */
.status { height: 34px; display: flex; align-items: center; background: #f5f4f2; color: #3a3f44; }
.fillstroke { width: 63px; display: grid; grid-template-columns: 40px 1fr; line-height: 17px; font-size: 12px; letter-spacing: -.2px; }
.lab-o { width: 14px; color: #3a3f44; }
.spin-o { width: 67px; height: 32px; }
.vsep { width: 1px; height: 34px; background: #dcdad6; flex: none; }
.vsep-a { margin-left: 44px; }
.eye { width: 36px; display: flex; justify-content: center; }
.slock { width: 36px; display: flex; justify-content: center; }
.layer { width: 78px; height: 33px; display: flex; align-items: center; justify-content: space-between; padding: 0 11px 0 12px; border: 1px solid #cfc9c3; border-radius: 5px; background: linear-gradient(#f8f7f6, #ecebe8); font-size: 10px; font-weight: 700; color: #333; flex: none; white-space: nowrap; }
.layer .caret { border-width: 6px 6px 0; }
.msg { margin: 0 0 0 2px; white-space: nowrap; font-size: 12px; color: #3a3f44; letter-spacing: -.21px; word-spacing: .3px; }
.msg b { margin-right: 2px; }
.readout { margin-left: auto; height: 34px; width: 342px; display: flex; align-items: center; border-left: 1px solid #dcdad6; padding-left: 11px; }
.coords { width: 75px; display: grid; grid-template-columns: 19px 1fr; line-height: 17px; letter-spacing: .2px; }
.lab-z { width: 20px; color: #3a3f44; }
.lab-r { width: 20px; margin-left: 10px; color: #3a3f44; }
.spin-z { width: 94px; height: 33px; background: #fff; }
.spin-r { width: 100px; height: 33px; background: #fff; }
.spin-z .val, .spin-r .val { color: #222; justify-content: center; }
.spin-z .pm, .spin-r .pm { width: 21px; color: #2e3436; }

/* taskbar */
.taskbar { height: 40px; display: flex; align-items: center; background: linear-gradient(90deg, #22161a, #0e1012 40%, #0b0e10); color: #e8e8e8; }
.tk { width: 49px; height: 40px; position: relative; display: flex; align-items: center; justify-content: center; flex: none; }
.tk-win { width: 45.500px; padding-right: 3px; }
.tk-tv { padding-right: 3px; }
.tk.on::after { content: ""; position: absolute; left: 4.500px; right: 4.500px; bottom: 0; height: 2px; background: #9bdcf7; }
.tk.active { background: #3c4042; }
.tk.active::after { left: 0; right: 0; }
.sublime { width: 24px; height: 24px; border-radius: 2px; background: #4a4a4a; display: flex; align-items: center; justify-content: center; }
.tray { margin-left: auto; display: flex; align-items: center; height: 40px; }
.ty { display: flex; justify-content: center; flex: none; }
.ty-p { width: 24px; }
.ty-c { width: 24px; margin-left: 12px; }
.ty-b { width: 24px; }
.ty-w { width: 26px; }
.ty-s { width: 22px; }
.clock { width: 66px; margin-left: 2px; display: flex; flex-direction: column; align-items: center; font-size: 12px; line-height: 18px; margin-top: 1px; letter-spacing: -.3px; }
.ty-n { width: 50px; margin-left: 5px; padding-right: 14px; }
```
